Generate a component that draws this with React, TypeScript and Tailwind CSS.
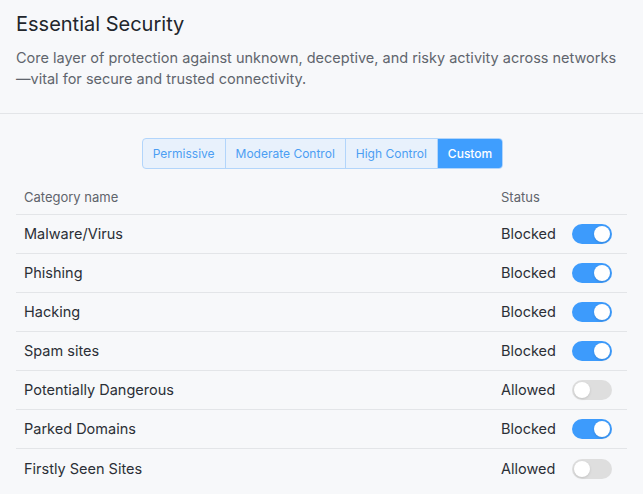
import { useState } from "react";

type Row = { name: string; blocked: boolean };

const initialRows: Row[] = [
  { name: "Malware/Virus", blocked: true },
  { name: "Phishing", blocked: true },
  { name: "Hacking", blocked: true },
  { name: "Spam sites", blocked: true },
  { name: "Potentially Dangerous", blocked: false },
  { name: "Parked Domains", blocked: true },
  { name: "Firstly Seen Sites", blocked: false },
];

const modes = ["Permissive", "Moderate Control", "High Control", "Custom"];

function Toggle({ on, onChange }: { on: boolean; onChange: () => void }) {
  return (
    <button
      onClick={onChange}
      className={`relative w-10 h-5 rounded-full transition-colors ${on ? "bg-[#3d9bfc]" : "bg-[#dedede]"}`}
    >
      <span
        className={`absolute top-[2px] w-4 h-4 rounded-full bg-white shadow-sm transition-all ${
          on ? "left-[22px]" : "left-[2px]"
        }`}
      />
    </button>
  );
}

export default function App() {
  const [rows, setRows] = useState(initialRows);
  const [mode, setMode] = useState("Custom");

  const flip = (i: number) =>
    setRows((r) => r.map((row, j) => (j === i ? { ...row, blocked: !row.blocked } : row)));

  return (
    <div className="min-h-[494px] bg-[#f7f8fa] font-['Inter',sans-serif] text-[#2b2f36]">
      {/* ── Header ─────────────────────────────── */}
      <div className="px-4 pt-[10px] pb-[24px] border-b border-[#e3e5e8]">
        <h1 className="text-[20px] leading-[28px] font-normal text-[#22262c]">Essential Security</h1>
        <p className="mt-[9px] text-[14.5px] leading-[21px] text-[#60656d]">
          Core layer of protection against unknown, deceptive, and risky activity across networks
          —vital for secure and trusted connectivity.
        </p>
      </div>

      {/* ── Mode switch ────────────────────────── */}
      <div className="flex justify-center pt-6 pl-[2px]">
        <div className="flex h-[31px] rounded border border-[#b2d5fb] bg-[#e8f1fc] overflow-hidden">
          {modes.map((m, i) => (
            <button
              key={m}
              onClick={() => setMode(m)}
              className={`px-[10px] text-[12px] ${i > 0 ? "border-l border-[#b2d5fb]" : ""} ${
                mode === m ? "bg-[#3f9efe] text-white font-medium" : "text-[#4c9ef3]"
              }`}
            >
              {m}
            </button>
          ))}
        </div>
      </div>

      {/* ── Table ──────────────────────────────── */}
      <div className="px-4 mt-[13px]">
        <div className="flex items-center h-[33px] border-b border-[#e3e5e8] text-[13px] text-[#5f646c]">
          <div className="flex-1 pl-2">Category name</div>
          <div className="w-[126px]">Status</div>
        </div>
        {rows.map((row, i) => (
          <div
            key={row.name}
            className="flex items-center h-[39px] border-b border-[#e3e5e8] text-[14.5px] last:border-b-0"
          >
            <div className="flex-1 pl-2 text-[#2b2f36]">{row.name}</div>
            <div className="w-[126px] flex items-center">
              <span className="w-[71px]">{row.blocked ? "Blocked" : "Allowed"}</span>
              <Toggle on={row.blocked} onChange={() => flip(i)} />
            </div>
          </div>
        ))}
      </div>
    </div>
  );
}
